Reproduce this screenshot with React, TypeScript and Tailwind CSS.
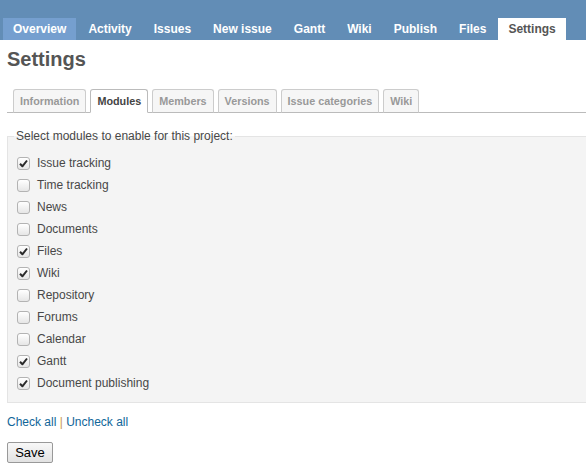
import React from "react";

const menu = [
  "Overview",
  "Activity",
  "Issues",
  "New issue",
  "Gantt",
  "Wiki",
  "Publish",
  "Files",
  "Settings",
];

const tabs = [
  "Information",
  "Modules",
  "Members",
  "Versions",
  "Issue categories",
  "Wiki",
];

const modules = [
  { name: "Issue tracking", on: true },
  { name: "Time tracking", on: false },
  { name: "News", on: false },
  { name: "Documents", on: false },
  { name: "Files", on: true },
  { name: "Wiki", on: true },
  { name: "Repository", on: false },
  { name: "Forums", on: false },
  { name: "Calendar", on: false },
  { name: "Gantt", on: true },
  { name: "Document publishing", on: true },
];

const Check = ({ on }: { on: boolean }) => (
  <span className="w-[13px] h-[13px] rounded-[3px] border border-[#b3b3b3] bg-gradient-to-b from-white to-[#e6e6e6] flex items-center justify-center shrink-0">
    {on && (
      <svg width="9" height="9" viewBox="0 0 9 9">
        <path
          d="M1 4.8 L3.4 7.3 L8 1.5"
          fill="none"
          stroke="#2a2a2a"
          strokeWidth="2"
          strokeLinejoin="round"
        />
      </svg>
    )}
  </span>
);

const App = () => {
  return (
    <div className="w-[586px] h-[473px] overflow-hidden bg-white font-['Liberation_Sans',Arial,sans-serif] text-[12px] text-[#484848]">
      <div className="bg-[#628db6] pt-[18px] pl-[3px] flex">
        {menu.map((m) => (
          <a
            key={m}
            className={`block h-[22px] leading-[22px] px-[10px] mr-[2px] text-[12px] font-bold whitespace-nowrap ${
              m === "Overview"
                ? "bg-[#759fcf] text-white"
                : m === "Settings"
                ? "bg-white text-[#555]"
                : "text-white"
            }`}
          >
            {m}
          </a>
        ))}
      </div>

      <div className="pl-[7px] pr-0">
        <h2 className="text-[20px] leading-[24px] font-bold text-[#555] mt-[7px]">
          Settings
        </h2>

        <ul className="flex items-end pl-[6px] border-b border-[#bbb] mt-[18px] h-[24px]">
          {tabs.map((t) => (
            <li key={t} className="mr-[4px] mb-[-1px]">
              <a
                className={`block text-[10.8px] leading-[14px] font-bold px-[6px] py-[4px] rounded-t-[3px] border whitespace-nowrap ${
                  t === "Modules"
                    ? "bg-white text-[#444] border-[#bbb] border-b-white"
                    : "bg-[#f6f6f6] text-[#999] border-[#ccc] border-b-[#bbb]"
                }`}
              >
                {t}
              </a>
            </li>
          ))}
        </ul>

        <fieldset className="mt-[16px] mr-[-10px] border border-[#e4e4e4] bg-[#f4f4f4] px-[6px] pt-[9px] pb-[8px]">
          <legend className="px-[2px] text-[12px] leading-[14px] text-[#484848]">
            Select modules to enable for this project:
          </legend>
          {modules.map((m) => (
            <label
              key={m.name}
              className="flex items-center h-[22px] pl-[3px] gap-[7px] text-[12px]"
            >
              <Check on={m.on} />
              {m.name}
            </label>
          ))}
        </fieldset>

        <p className="mt-[12px] text-[12px] leading-[14px]">
          <a className="text-[#169]">Check all</a>
          <span className="text-[#c99a50]"> | </span>
          <a className="text-[#169]">Uncheck all</a>
        </p>

        <button className="mt-[13px] h-[21px] w-[46px] border border-[#999] rounded-[2px] bg-gradient-to-b from-[#f8f8f8] to-[#e2e2e2] text-[13px] text-black leading-[19px]">
          Save
        </button>
      </div>
    </div>
  );
};

export default App;
